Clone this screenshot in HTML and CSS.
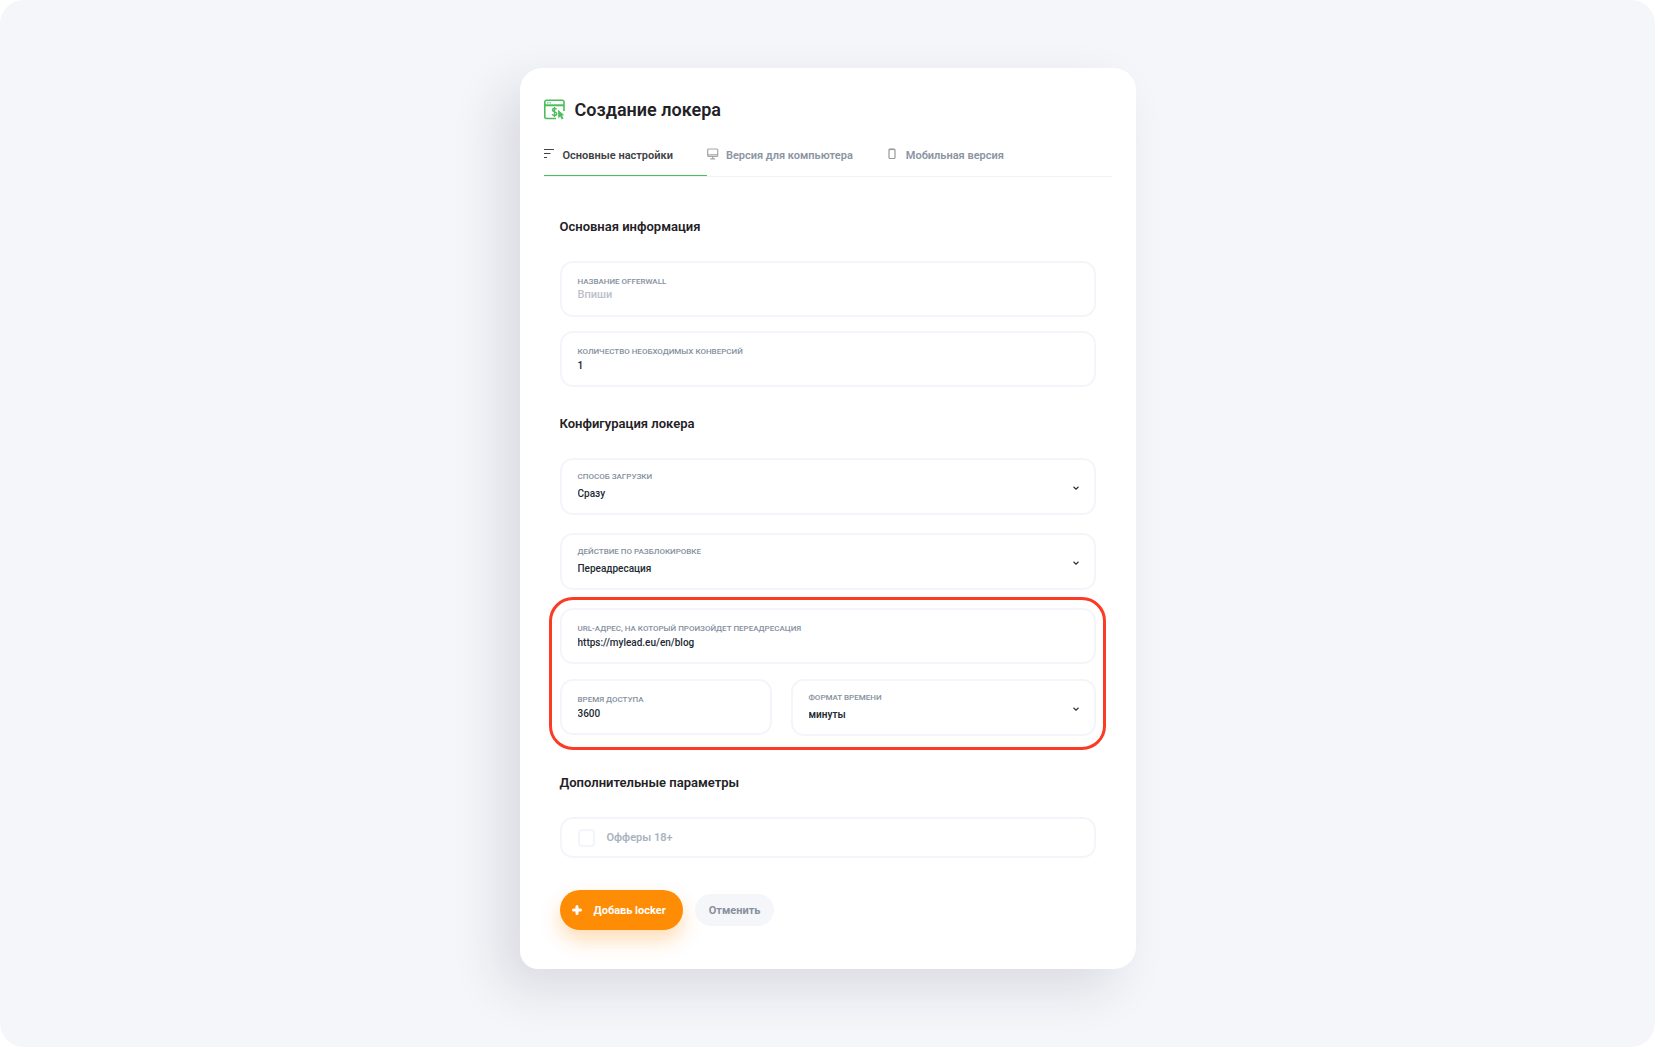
FILE: index.html
```
<!DOCTYPE html>
<html lang="ru">
<head>
    <meta charset="UTF-8">
    <meta name="viewport" content="width=device-width, initial-scale=1.0">
    <title>Создание локера</title>
    <link rel="stylesheet" href="styles.css">
</head>
<body>
    <main class="page">
        <div class="card">
            <header class="card-header">
                <svg class="logo" viewBox="0 0 22 22" fill="none" stroke="#4bbd5b">
                    <path d="M12 19.5H2.5A1.7 1.7 0 0 1 .8 17.8V3A1.7 1.7 0 0 1 2.5 1.2H18.2A1.7 1.7 0 0 1 20 3V12" stroke-width="1.6"/>
                    <path d="M.8 6.3H20" stroke-width="2"/>
                    <path d="M3 3.9H4.5M5.5 3.9H7" stroke-width="1"/>
                    <path d="M12.5 10.4C12.1 9.6 11.4 9.4 10.5 9.4C9.3 9.4 8.5 10 8.5 11C8.5 13.4 12.7 12.2 12.7 14.8C12.7 15.8 11.8 16.5 10.5 16.5C9.4 16.5 8.5 16 8.2 15.1M10.5 8V18" stroke-width="1.4"/>
                    <path d="M14 10.8L20.3 16.2L17.9 16.6L19.5 19.6L17.7 20.5L16.3 17.6L14.3 19.2Z" fill="#4bbd5b" stroke="none"/>
                </svg>
                <h1>Создание локера</h1>
            </header>

            <nav class="tabs">
                <a class="tab active" href="#main">
                    <svg viewBox="0 0 12 12" stroke="#444" stroke-width="1.2">
                        <path d="M0 1.5H10M0 5.5H6.5M0 9.5H3"/>
                    </svg>
                    Основные настройки
                </a>
                <a class="tab" href="#desktop">
                    <svg viewBox="0 0 12 12" fill="none" stroke="#a5a5a5" stroke-width="1.2">
                        <rect x="0.7" y="1" width="10" height="7.5" rx="1"/>
                        <path d="M.7 6.8H10.7M3.2 10.8H8.2M5.7 8.5V10.5"/>
                    </svg>
                    Версия для компьютера
                </a>
                <a class="tab" href="#mobile">
                    <svg viewBox="0 0 12 12" fill="none" stroke="#999" stroke-width="1.2">
                        <rect x="2" y="1" width="6" height="9.5" rx="1"/>
                        <path d="M2.5 1.5H7.5"/>
                    </svg>
                    Мобильная версия
                </a>
            </nav>

            <form class="form">
                <h2>Основная информация</h2>
                <div class="fields">
                    <label class="field">
                        <span>Название offerwall</span>
                        <input class="name-input" type="text" placeholder="Впиши">
                    </label>
                    <label class="field">
                        <span>Количество необходимых конверсий</span>
                        <input class="strong" type="text" value="1">
                    </label>
                </div>

                <h2>Конфигурация локера</h2>
                <div class="fields config">
                    <label class="field select-field">
                        <span>Способ загрузки</span>
                        <select><option>Сразу</option></select>
                        <svg class="arrow" viewBox="0 0 6 4"><path d="M.5 .8L3 3.2L5.5 .8"/></svg>
                    </label>
                    <label class="field select-field">
                        <span>Действие по разблокировке</span>
                        <select><option>Переадресация</option></select>
                        <svg class="arrow" viewBox="0 0 6 4"><path d="M.5 .8L3 3.2L5.5 .8"/></svg>
                    </label>
                    <div class="fields highlight">
                        <label class="field">
                            <span>URL-адрес, на который произойдет переадресация</span>
                            <input type="text" value="https://mylead.eu/en/blog">
                        </label>
                        <div class="row">
                            <label class="field">
                                <span>Время доступа</span>
                                <input type="text" value="3600">
                            </label>
                            <label class="field select-field">
                                <span>Формат времени</span>
                                <select class="strong"><option>минуты</option></select>
                                <svg class="arrow" viewBox="0 0 6 4"><path d="M.5 .8L3 3.2L5.5 .8"/></svg>
                            </label>
                        </div>
                    </div>
                </div>

                <h2 class="extra">Дополнительные параметры</h2>
                <label class="check-field">
                    <input type="checkbox">
                    Офферы 18+
                </label>

                <div class="buttons">
                    <button class="btn-add" type="button">
                        <svg viewBox="0 0 10 10"><path d="M5 1.5V8.5M1.5 5H8.5"/></svg>
                        Добавь locker
                    </button>
                    <button class="btn-cancel" type="button">Отменить</button>
                </div>
            </form>
        </div>
    </main>
</body>
</html>
```
FILE: styles.css
```
* {
    box-sizing: border-box;
}
body {
    margin: 0;
    background: #fff;
    font-family: Roboto, sans-serif;
    color: #1f2226;
}
.page {
    min-height: 100vh;
    padding: 68px 20px;
    background: #f4f6fa;
    border-radius: 24px;
}
.card {
    max-width: 616px;
    margin: 0 auto;
    padding: 30px 24px 39px;
    background: #fff;
    border-radius: 22px 22px 22px 18px;
    box-shadow: -20px 20px 50px rgba(40, 35, 50, 0.12);
}
.card-header {
    display: flex;
    align-items: center;
    gap: 9px;
}
.logo {
    width: 22px;
    height: 22px;
}
h1 {
    margin: 0;
    font-size: 18px;
    font-weight: 600;
    line-height: 24px;
}

/* tabs */
.tabs {
    display: flex;
    margin-top: 13px;
    border-bottom: 1px solid #f1f2f7;
}
.tab {
    display: flex;
    align-items: center;
    padding: 13px 34px 11px 0;
    font-size: 11px;
    font-weight: 600;
    line-height: 16px;
    color: #8a94a3;
    text-decoration: none;
    border-bottom: 1px solid transparent;
}
.tab.active {
    color: #3d4146;
    border-color: #4bbd5b;
}
.tab svg {
    width: 12px;
    height: 12px;
    margin-right: 7px;
    margin-bottom: 4px;
}

/* form */
.form {
    padding: 0 16px;
}
h2 {
    margin: 27px 0 24px;
    font-size: 13px;
    font-weight: 600;
    line-height: 20px;
}
.form h2:first-child {
    margin-top: 40px;
}
.form h2.extra {
    margin-top: 37px;
}
.fields {
    display: flex;
    flex-direction: column;
    gap: 14px;
}
.config {
    gap: 18px;
}
.field {
    position: relative;
    height: 56px;
    padding: 14px 16px 0;
    border: 2px solid #f4f5fa;
    border-radius: 13px;
}
.field span {
    display: block;
    font-size: 8px;
    font-weight: 500;
    line-height: 10px;
    text-transform: uppercase;
    color: #8490a0;
}
.field input, .field select {
    display: block;
    width: 100%;
    height: 16px;
    margin: 1px 0 0;
    padding: 0;
    border: none;
    outline: none;
    background: none;
    appearance: none;
    font-family: Roboto, sans-serif;
    font-size: 10px;
    font-weight: 500;
    line-height: 16px;
    color: #222b33;
}
.field .strong {
    font-weight: 600;
}
.field .name-input {
    margin-top: 0;
    font-size: 11px;
}
.name-input::placeholder {
    color: #bcc1c9;
}
.select-field {
    height: 57px;
    padding-top: 12px;
}
.field select {
    margin-top: 4px;
}
.arrow {
    position: absolute;
    right: 15px;
    top: 26px;
    width: 6px;
    height: 4px;
    fill: none;
    stroke: #333;
    stroke-width: 1.2;
}
.highlight {
    position: relative;
    gap: 15px;
}
.highlight::after {
    content: "";
    position: absolute;
    inset: -11px -10px -14px -11px;
    border: 3px solid #fb3b26;
    border-radius: 24px;
    pointer-events: none;
}
.row {
    display: grid;
    grid-template-columns: 212fr 305fr;
    gap: 19px;
    align-items: start;
}
.check-field {
    display: flex;
    align-items: center;
    gap: 12px;
    height: 41px;
    padding: 0 16px;
    border: 2px solid #f4f5fa;
    border-radius: 13px;
    font-size: 11px;
    font-weight: 600;
    color: #a9b3c0;
}
.check-field input {
    appearance: none;
    width: 17px;
    height: 18px;
    margin: 0;
    border: 2px solid #f4f5fa;
    border-radius: 4px;
}

/* buttons */
.buttons {
    display: flex;
    align-items: center;
    gap: 12px;
    margin-top: 32px;
}
.buttons button {
    border: none;
    font-family: Roboto, sans-serif;
    font-size: 11px;
    font-weight: 700;
    cursor: pointer;
}
.buttons .btn-add {
    display: flex;
    align-items: center;
    gap: 12px;
    height: 40px;
    padding: 0 17px 0 12px;
    border-radius: 20px;
    background: #ff8c05;
    color: #fff;
    box-shadow: 0 10px 20px rgba(255, 140, 5, 0.3);
}
.btn-add svg {
    width: 10px;
    height: 10px;
    stroke: #fff;
    stroke-width: 3;
    stroke-linecap: round;
}
.btn-cancel {
    height: 32px;
    padding: 0 14px;
    border-radius: 16px;
    background: #f4f6fa;
    color: #87909c;
}
```
